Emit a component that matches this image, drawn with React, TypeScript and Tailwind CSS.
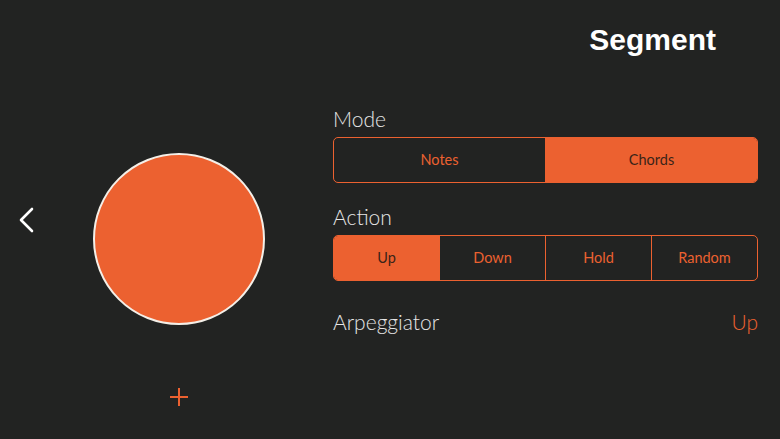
import React from "react";

const ORANGE = "#ec6130";

function Segmented({ items, active }: { items: string[]; active: number }) {
  return (
    <div className="flex h-[46px] w-full overflow-hidden rounded-[5px] border border-[#ec6130]">
      {items.map((it, i) => (
        <div
          key={it}
          className={
            "flex flex-1 items-center justify-center text-[14.5px] font-normal " +
            (i > 0 ? "border-l border-[#ec6130] " : "") +
            (i === active ? "bg-[#ec6130] text-[#3a2418]" : "text-[#ec6130]")
          }
        >
          {it}
        </div>
      ))}
    </div>
  );
}

export default function App() {
  return (
    <div
      className="flex h-[439px] w-[780px] bg-[#222322] text-[#e6e6e6]"
      style={{ fontFamily: "Lato, 'Liberation Sans', sans-serif" }}
    >
      <div className="flex w-[333px] flex-col pt-[153px]">
        <div className="flex items-start">
          <div className="ml-[18px] mt-[54px] h-[26px] w-[16px]">
            <svg width="16" height="26" viewBox="0 0 16 26" fill="none">
              <path d="M14 2 L3 13 L14 24" stroke="#ffffff" strokeWidth="2.6" strokeLinecap="round" strokeLinejoin="round" />
            </svg>
          </div>
          <div className="ml-[59px] h-[172px] w-[172px] rounded-full border-2 border-[#f4efe8] bg-[#ec6130]" />
        </div>
        <div className="ml-[169px] mt-[62px] h-[20px] w-[20px]">
          <svg width="20" height="20" viewBox="0 0 20 20">
            <path d="M10 1 V19 M1 10 H19" stroke={ORANGE} strokeWidth="2" />
          </svg>
        </div>
      </div>
      <div className="flex flex-1 flex-col pr-[22px]">
        <div
          className="mr-[42px] mt-[22px] text-right text-[30px] font-bold leading-[36px] text-white"
          style={{ fontFamily: "'Liberation Sans', Arial, sans-serif" }}
        >
          Segment
        </div>
        <div className="mt-[48px] text-[21px] font-light leading-[26px]">Mode</div>
        <div className="mt-[5px]">
          <Segmented items={["Notes", "Chords"]} active={1} />
        </div>
        <div className="mt-[21px] text-[21px] font-light leading-[26px]">Action</div>
        <div className="mt-[5px]">
          <Segmented items={["Up", "Down", "Hold", "Random"]} active={0} />
        </div>
        <div className="mt-[28px] flex items-center justify-between text-[21px] font-light leading-[26px]">
          <span>Arpeggiator</span>
          <span className="text-[#ec6130]">Up</span>
        </div>
      </div>
    </div>
  );
}
